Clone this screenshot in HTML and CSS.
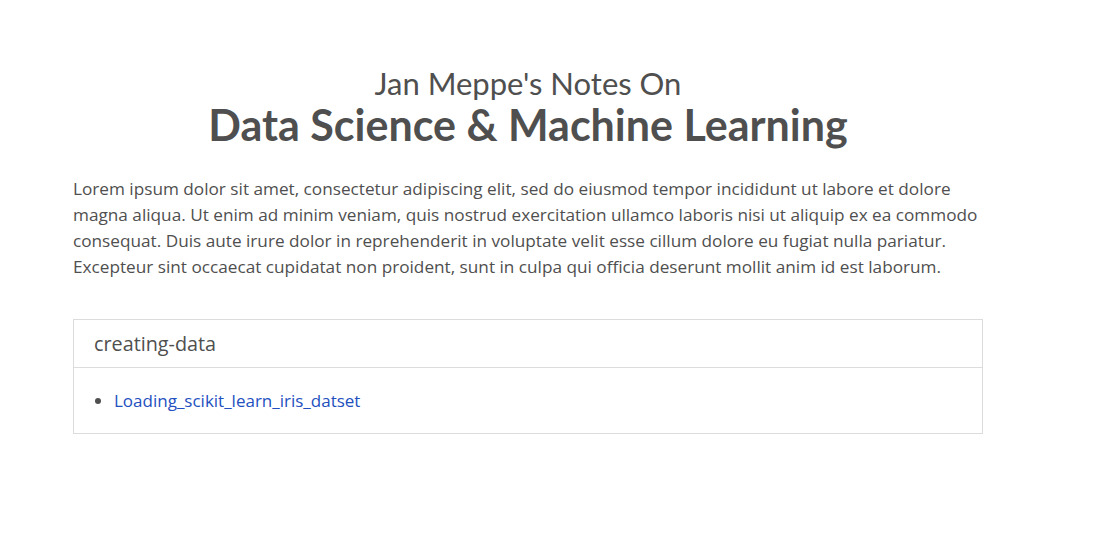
FILE: index.html
```html
<!DOCTYPE html>
<html lang="en">
<head>
<meta charset="utf-8">
<title>Jan Meppe's Notes</title>
<link rel="stylesheet" href="styles.css">
</head>
<body>
<main class="container">
  <header class="masthead">
    <div class="subtitle">Jan Meppe's Notes On</div>
    <h1 class="title">Data Science &amp; Machine Learning</h1>
  </header>
  <p class="intro">Lorem ipsum dolor sit amet, consectetur adipiscing elit, sed do eiusmod tempor incididunt ut labore et dolore magna aliqua. Ut enim ad minim veniam, quis nostrud exercitation ullamco laboris nisi ut aliquip ex ea commodo consequat. Duis aute irure dolor in reprehenderit in voluptate velit esse cillum dolore eu fugiat nulla pariatur. Excepteur sint occaecat cupidatat non proident, sunt in culpa qui officia deserunt mollit anim id est laborum.</p>
  <section class="card">
    <div class="card-header">creating-data</div>
    <div class="card-body">
      <ul class="post-list">
        <li><a href="#">Loading_scikit_learn_iris_datset</a></li>
      </ul>
    </div>
  </section>
</main>
</body>
</html>
```
FILE: styles.css
```css
* { box-sizing: border-box; }
html, body { margin: 0; padding: 0; background: #fff; }
body {
  font-family: "Open Sans", "Lato", sans-serif;
  color: #4f4f4f;
}
.container {
  width: 910px;
  margin-left: 73px;
  padding-top: 65px;
}
.masthead { text-align: center; }
.subtitle {
  font-family: "Lato", "Open Sans", sans-serif;
  font-size: 31px;
  line-height: 36px;
  font-weight: 400;
}
.title {
  margin: 0;
  font-family: "Lato", "Open Sans", sans-serif;
  font-size: 43px;
  line-height: 48px;
  font-weight: 700;
}
.intro {
  margin: 27px 0 0;
  font-size: 17.2px;
  line-height: 26px;
}
.card {
  margin-top: 39px;
  border: 1px solid #dcdcdc;
}
.card-header {
  height: 48px;
  padding: 0 20px;
  font-size: 19.8px;
  line-height: 47px;
  border-bottom: 1px solid #dcdcdc;
}
.card-body { padding: 21px 20px 20px; }
.post-list {
  margin: 0;
  padding-left: 20px;
  font-size: 17px;
  line-height: 24px;
}
.post-list a { color: #2350bf; text-decoration: none; }
```
